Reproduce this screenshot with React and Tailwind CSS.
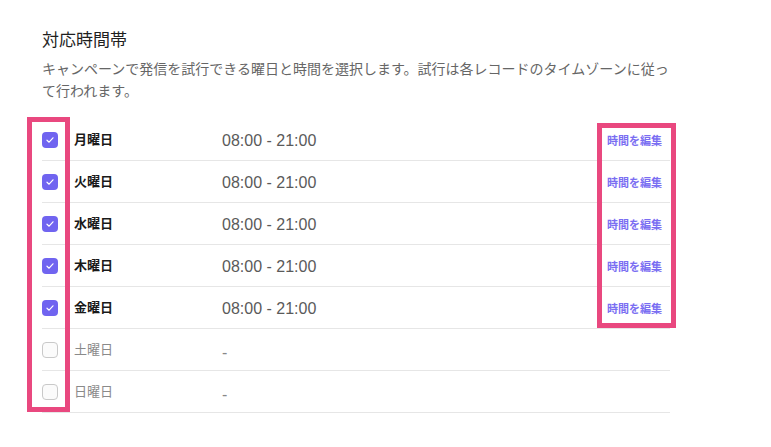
const days = [
  { name: '月曜日', on: true },
  { name: '火曜日', on: true },
  { name: '水曜日', on: true },
  { name: '木曜日', on: true },
  { name: '金曜日', on: true },
  { name: '土曜日', on: false },
  { name: '日曜日', on: false },
];

function Check({ on }) {
  if (!on) {
    return <span className="block w-4 h-4 rounded-[4px] border border-[#c9c9c9] bg-[#fbfbfb]" />;
  }
  return (
    <span className="flex w-4 h-4 items-center justify-center rounded-[4px] bg-[#7064f0]">
      <svg width="10" height="10" viewBox="0 0 10 10" fill="none">
        <path d="M2 5.2 4.1 7.2 8 2.8" stroke="#fff" strokeWidth="1.2" strokeLinecap="round" strokeLinejoin="round" />
      </svg>
    </span>
  );
}

export default function App() {
  return (
    <div className="relative min-h-[447px] bg-white pl-[42px] pt-[29px] font-['Liberation_Sans','Noto_Sans_CJK_JP',sans-serif] text-[#222]">
      <h2 className="text-[17px] leading-[24px] text-[#1f1f1f]">対応時間帯</h2>
      <p className="mt-[5px] w-[634px] text-[14px] leading-[22px] text-[#666]">
        キャンペーンで発信を試行できる曜日と時間を選択します。試行は各レコードのタイムゾーンに従って行われます。
      </p>

      <div className="mt-[17px] w-[628px]">
        {days.map((d) => (
          <div key={d.name} className="flex h-[42px] items-center border-b border-[#e6e6e6]">
            <Check on={d.on} />
            <span
              className={
                d.on
                  ? 'ml-4 w-[148px] text-[13px] font-bold text-[#1a1a1a]'
                  : 'ml-4 w-[148px] text-[13px] text-[#8a8a8a]'
              }
            >
              {d.name}
            </span>
            <span className={d.on ? 'text-[16px] text-[#5a5a5a] mt-[3px]' : 'text-[16px] text-[#888] mt-[6px]'}>
              {d.on ? '08:00 - 21:00' : '-'}
            </span>
            {d.on && (
              <a className="ml-auto mr-2 mt-[3px] text-[11px] font-bold text-[#7a6ef2]">時間を編集</a>
            )}
          </div>
        ))}
      </div>

      <div className="absolute left-[27px] top-[117px] w-[43px] h-[295px] border-[5px] border-[#e9487f]" />
      <div className="absolute left-[597px] top-[123px] w-[79px] h-[205px] border-[5px] border-[#e9487f]" />
    </div>
  );
}
